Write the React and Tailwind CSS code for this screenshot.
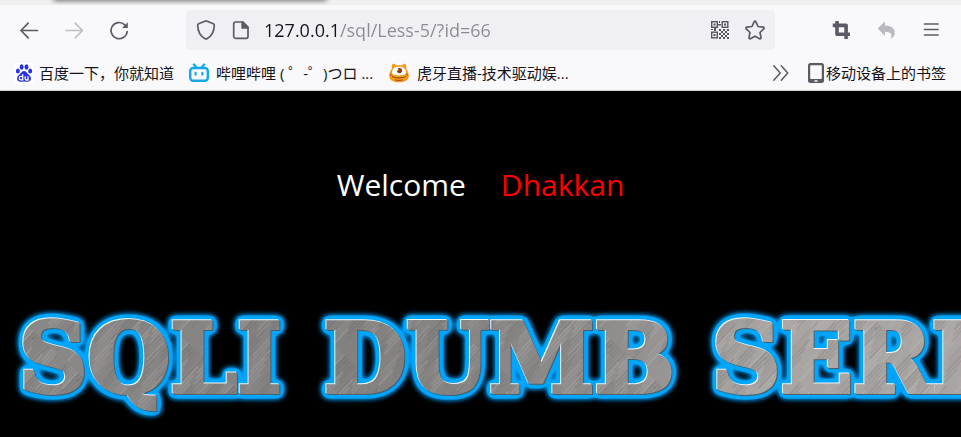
import React from "react";

const line = { fill: "none", stroke: "#5b5b66", strokeWidth: 1.7, strokeLinecap: "round", strokeLinejoin: "round" };

function ToolButton({ label, children, disabled }) {
  return (
    <button type="button" aria-label={label} disabled={disabled} className="flex h-10 w-[45px] shrink-0 items-center justify-center">
      {children}
    </button>
  );
}

const BackIcon = () => (
  <svg width="20" height="20" viewBox="0 0 20 20" {...line}>
    <path d="M17.5 10.5H1M8.2 3.2 1 10.5l7.2 7.3" />
  </svg>
);

const ForwardIcon = () => (
  <svg width="20" height="20" viewBox="0 0 20 20" {...line} stroke="#bfbfc5">
    <path d="M1 10.5H17.5M10.3 3.2l7.2 7.3-7.2 7.3" />
  </svg>
);

const ReloadIcon = () => (
  <svg width="20" height="20" viewBox="0 0 20 20" {...line}>
    <path d="M14.8 4.8A8.1 8.1 0 1 0 17.2 11.5" />
    <path d="M17.8 2.2v5.8h-5.8z" fill="#5b5b66" stroke="none" />
  </svg>
);

const ShieldIcon = () => (
  <svg width="20" height="20" viewBox="0 0 20 20" {...line}>
    <path d="M10 .9c.5 0 .8.2 1.2.4l6.2 2.5c.6.3.9.7.9 1.4-.1 6.2-2 10.6-7.4 13.5-.6.3-1.2.3-1.8 0C3.7 15.8 1.8 11.4 1.7 5.2c0-.7.3-1.1.9-1.4l6.2-2.5c.4-.2.7-.4 1.2-.4z" />
  </svg>
);

const PageIcon = () => (
  <svg width="20" height="20" viewBox="0 0 20 20" {...line}>
    <path d="M4.5 2h7.5l5 5v9.5a1.8 1.8 0 0 1-1.8 1.8H4.5a1.8 1.8 0 0 1-1.8-1.8V3.8A1.8 1.8 0 0 1 4.5 2z" />
    <path d="M11.2 2v6H17z" fill="#5b5b66" />
  </svg>
);

const QrIcon = () => (
  <svg width="20" height="20" viewBox="0 0 20 20">
    <g fill="none" stroke="#55555d" strokeWidth="1.4">
      <rect x="1.7" y="1.7" width="5.6" height="5.6" />
      <rect x="12.2" y="1.7" width="5.6" height="5.6" />
      <rect x="1.7" y="12.2" width="5.6" height="5.6" />
    </g>
    <g fill="#55555d">
      <path d="M3.5 3.5h2v2h-2zM14 3.5h2v2h-2zM3.5 14h2v2h-2zM9 1h1v2H9zM8 4h3v1.5H8zM9 9h2v2H9zM11 11h2v2h-2zM13 9h2v2h-2zM17 9h2v2h-2zM15 11h2v2h-2zM13 13h2v2h-2zM17 13h2v2h-2zM11 15h2v2h-2zM15 15h2v2h-2zM13 17h2v2h-2zM17 17h2v2h-2zM9 13h2v2H9zM9 17h2v2H9zM4 8h2v3H4zM1 9h2v1H1z" />
    </g>
  </svg>
);

const StarIcon = () => (
  <svg width="20" height="20" viewBox="0 0 20 20" {...line}>
    <path d="M9.2 1.7c.3-.8 1.3-.8 1.6 0l2.2 4.8 5.2.7c.8.1 1.1 1 .5 1.6L15 12.5l1 5.2c.1.8-.7 1.4-1.4 1L10 16.2l-4.6 2.5c-.7.4-1.5-.2-1.4-1l1-5.2-3.700-3.7c-.6-.6-.3-1.5.5-1.6L7 6.5z" />
  </svg>
);

const CropIcon = () => (
  <svg width="20" height="20" viewBox="0 0 20 20" fill="none" stroke="#5b5b66" strokeWidth="3.6" strokeLinejoin="round">
    <path d="M5 1v13.2h13M.8 5.4h13.3V19" />
  </svg>
);

const UndoIcon = () => (
  <svg width="20" height="20" viewBox="0 0 20 20" fill="#b9b9c0">
    <path d="M8 1.3v4.2c6.2 0 9.8 2.8 9.8 7.4 0 2.6-1.6 4.9-4.8 6.1 1.4-1.6 1.7-3 1.3-4.3-.7-2.1-2.8-2.900-6.3-2.900V16L.7 8.6z" />
  </svg>
);

const MenuIcon = () => (
  <svg width="20" height="20" viewBox="0 0 20 20" {...line}>
    <path d="M2.5 4H16M2.5 9.5H16M2.5 15H16" />
  </svg>
);

const BaiduIcon = () => (
  <svg width="20" height="20" viewBox="0 0 20 20" className="shrink-0">
    <path fill="#fff" d="M0 0h20v20H0z" />
    <g fill="#2932e1">
      <ellipse cx="3.9" cy="8" rx="2" ry="2.5" />
      <ellipse cx="7.6" cy="4" rx="2" ry="2.7" />
      <ellipse cx="12.5" cy="4" rx="2" ry="2.7" />
      <ellipse cx="16.2" cy="8" rx="2" ry="2.5" />
      <path d="M10 8c-1.8 0-2.6 1.5-3.6 2.6-1.6 1.6-3.4 2.7-3.4 5 0 2 1.5 3.2 3.3 3.2 1.3 0 2.4-.3 3.7-.3s2.4.3 3.7.3c1.8 0 3.3-1.2 3.3-3.2 0-2.3-1.8-3.4-3.4-5-1-1.1-1.8-2.6-3.6-2.6z" />
    </g>
    <path d="M8.7 11.3v5.6H7a1.7 1.7 0 0 1 0-3.5h1.7M11.2 13.2v2.5c0 .9.5 1.3 1.3 1.3H14v-3.8" fill="none" stroke="#fff" strokeWidth="1.3" />
  </svg>
);

const BilibiliIcon = () => (
  <svg width="20" height="20" viewBox="0 0 20 20" className="shrink-0" fill="none" stroke="#14a9e2" strokeLinecap="round">
    <rect x="1.2" y="5" width="17.6" height="12.7" rx="3" strokeWidth="2.4" />
    <path d="m4.8 1.5 2.6 2.7M15.2 1.5l-2.6 2.7" strokeWidth="2.2" />
    <path d="M6.6 9.8v1.8M13.4 9.8v1.8" strokeWidth="2.2" />
  </svg>
);

const HuyaIcon = () => (
  <svg width="20" height="20" viewBox="0 0 20 20" className="shrink-0">
    <path fill="#f79b16" d="M3 5.5C2.3 3 2.8.8 4.2.8c1 0 2 .7 2.7 1.6a11 11 0 0 1 6.2 0c.8-.9 1.8-1.6 2.7-1.6 1.4 0 1.9 2.2 1.2 4.7 1.7 2 2.8 4.7 2.8 7.4 0 4-4 6.3-9.8 6.3S.2 16.9.2 12.9c0-2.7 1.1-5.4 2.8-7.4z" />
    <path fill="#fff" d="M5 5.2C7 3.3 13 3.3 15 5.2c2.3 1.9 2.7 4.8 1.1 6.1-2.4 1.5-9.800 1.5-12.200 0C2.3 10 2.7 7.1 5 5.2z" />
    <circle cx="10.5" cy="7.6" r="2.6" fill="#8e3d0e" />
    <path fill="#fff" d="m7.8 5.4 2 1.5-2 1z" />
    <path d="M3 13.5c3.5 1.8 10.5 1.8 14 0M6 16.8c2.5.8 5.5.8 8 0M1 11.5l1.5.8M19 11.5l-1.5.8" fill="none" stroke="#9a5212" strokeWidth="1.1" />
  </svg>
);

const ChevronsIcon = () => (
  <svg width="18" height="20" viewBox="0 0 18 20" {...line} strokeWidth="1.5">
    <path d="m1.8 2.8 6.4 7.2-6.4 7.2M9.3 2.8l6.4 7.2-6.4 7.2" />
  </svg>
);

const PhoneIcon = () => (
  <svg width="16" height="20" viewBox="0 0 16 20" className="shrink-0">
    <rect width="16" height="20" rx="2.5" fill="#5b5b66" />
    <rect x="2.2" y="2.2" width="11.6" height="13.8" rx="1" fill="#f9f9fb" />
    <path d="M7 18h2" stroke="#f9f9fb" strokeWidth="1.5" strokeLinecap="round" />
  </svg>
);

const WORDS = [
  { text: "SQLI", x: 19 },
  { text: "DUMB", x: 324 },
  { text: "SERIES", x: 712 },
];

const SCRATCHES = Array.from({ length: 60 }, (_, i) => ({
  x: (i * 37) % 97,
  y: (i * 53) % 61,
  length: 18 + ((i * 29) % 38),
  light: i % 2 === 0,
  opacity: 0.14 + ((i * 7) % 5) * 0.05,
}));

function Banner() {
  return (
    <svg height="137" className="block w-full" role="img" aria-label="SQLI DUMB SERIES">
      <defs>
        <linearGradient id="steel" gradientUnits="userSpaceOnUse" x1="0" y1="0" x2="1200" y2="0">
          <stop offset="0" stopColor="#8b8988" />
          <stop offset="0.3" stopColor="#838180" />
          <stop offset="0.5" stopColor="#8e8c8b" />
          <stop offset="0.65" stopColor="#a9a5a3" />
          <stop offset="1" stopColor="#a9a5a3" />
        </linearGradient>
        <pattern id="scratches" width="97" height="61" patternUnits="userSpaceOnUse" patternTransform="rotate(-47)">
          {SCRATCHES.map((s, i) => (
            <path key={i} d={`M${s.x} ${s.y}h${s.length}`} stroke={s.light ? "#dcd8d6" : "#4c4a4a"} strokeOpacity={s.opacity} strokeWidth="1" />
          ))}
        </pattern>
        <pattern id="metal" width="1300" height="137" patternUnits="userSpaceOnUse">
          <rect width="1300" height="137" fill="url(#steel)" />
          <rect width="1300" height="137" fill="url(#scratches)" />
        </pattern>
        <filter id="bevel" filterUnits="userSpaceOnUse" x="0" y="0" width="1300" height="137" colorInterpolationFilters="sRGB">
          <feGaussianBlur in="SourceAlpha" stdDeviation="3" result="spread" />
          <feComponentTransfer in="spread" result="wide">
            <feFuncA type="linear" slope="30" intercept="-0.3" />
          </feComponentTransfer>
          <feGaussianBlur in="wide" stdDeviation="2.2" result="halo" />
          <feFlood floodColor="#0092ea" />
          <feComposite in2="halo" operator="in" result="haloBlue" />
          <feComponentTransfer in="spread" result="near">
            <feFuncA type="linear" slope="16" intercept="-0.6" />
          </feComponentTransfer>
          <feFlood floodColor="#00a6fb" />
          <feComposite in2="near" operator="in" result="nearBlue" />
          <feOffset in="SourceAlpha" dx="-1" dy="-1" result="upper" />
          <feFlood floodColor="#f2f5f6" />
          <feComposite in2="upper" operator="in" result="highlight" />
          <feOffset in="SourceAlpha" dx="1" dy="1" result="lower" />
          <feFlood floodColor="#45606f" />
          <feComposite in2="lower" operator="in" result="shade" />
          <feMerge>
            <feMergeNode in="haloBlue" />
            <feMergeNode in="nearBlue" />
            <feMergeNode in="shade" />
            <feMergeNode in="highlight" />
            <feMergeNode in="SourceGraphic" />
          </feMerge>
        </filter>
      </defs>
      <g filter="url(#bevel)" fill="url(#metal)" stroke="url(#metal)" strokeWidth="4" fontFamily="'DejaVu Serif', serif" fontWeight="bold" fontSize="95">
        {WORDS.map((w) => (
          <text key={w.text} x={w.x} y="92">{w.text}</text>
        ))}
      </g>
    </svg>
  );
}

export default function App() {
  return (
    <div className="flex min-h-screen flex-col overflow-hidden bg-black font-['Open_Sans','Noto_Sans_CJK_SC',sans-serif] text-[#15141a]">
      <header className="border-b border-[#cccccf] bg-[#f9f9fb]">
        <div className="h-[5px] overflow-hidden bg-[#f0f0f0] pl-[54px]">
          <div className="-mt-1 h-1 w-[272px] rounded-sm bg-white shadow-[0_0_5px_1px_#707070]" />
        </div>

        <nav aria-label="Navigation" className="flex h-[50px] items-center px-[7px]">
          <ToolButton label="Back"><BackIcon /></ToolButton>
          <ToolButton label="Forward" disabled><ForwardIcon /></ToolButton>
          <ToolButton label="Reload"><ReloadIcon /></ToolButton>
          <div className="mx-11 flex h-10 min-w-0 flex-1 items-center rounded bg-[#f0f0f4] px-[10px]">
            <button type="button" aria-label="Tracking protection" className="shrink-0"><ShieldIcon /></button>
            <button type="button" aria-label="Site information" className="ml-[15px] shrink-0"><PageIcon /></button>
            <input
              type="text"
              aria-label="Address"
              defaultValue="127.0.0.1/sql/Less-5/?id=66"
              className="ml-[13px] h-8 min-w-0 flex-1 bg-[linear-gradient(90deg,#15141a_76px,#8b8b91_76px)] bg-clip-text text-lg text-transparent outline-none"
            />
            <button type="button" aria-label="QR code" className="shrink-0"><QrIcon /></button>
            <button type="button" aria-label="Bookmark this page" className="ml-[15px] shrink-0"><StarIcon /></button>
          </div>
          <ToolButton label="Screenshot"><CropIcon /></ToolButton>
          <ToolButton label="Undo" disabled><UndoIcon /></ToolButton>
          <ToolButton label="Menu"><MenuIcon /></ToolButton>
        </nav>

        <nav aria-label="Bookmarks" className="flex h-[35px] items-center whitespace-nowrap pl-[14px] pr-[15px] text-[15px] leading-5">
          <a href="#baidu" className="flex items-center gap-[5px]"><BaiduIcon />百度一下，你就知道</a>
          <a href="#bilibili" className="ml-[15px] flex w-[200px] items-center gap-[7px]"><BilibiliIcon />哔哩哔哩 ( ゜-゜)つロ ...</a>
          <a href="#huya" className="flex items-center gap-2"><HuyaIcon />虎牙直播-技术驱动娱...</a>
          <button type="button" aria-label="More bookmarks" className="ml-auto"><ChevronsIcon /></button>
          <a href="#mobile" className="ml-[18px] flex items-center gap-[2px]"><PhoneIcon />移动设备上的书签</a>
        </nav>
      </header>

      <main className="flex-1 overflow-hidden">
        <h1 className="flex h-[209px] items-start justify-center gap-[35px] pt-[74px] text-[30px] leading-10 text-white">
          <span>Welcome</span>
          <span className="text-[#ff0000]">Dhakkan</span>
        </h1>
        <Banner />
      </main>
    </div>
  );
}
